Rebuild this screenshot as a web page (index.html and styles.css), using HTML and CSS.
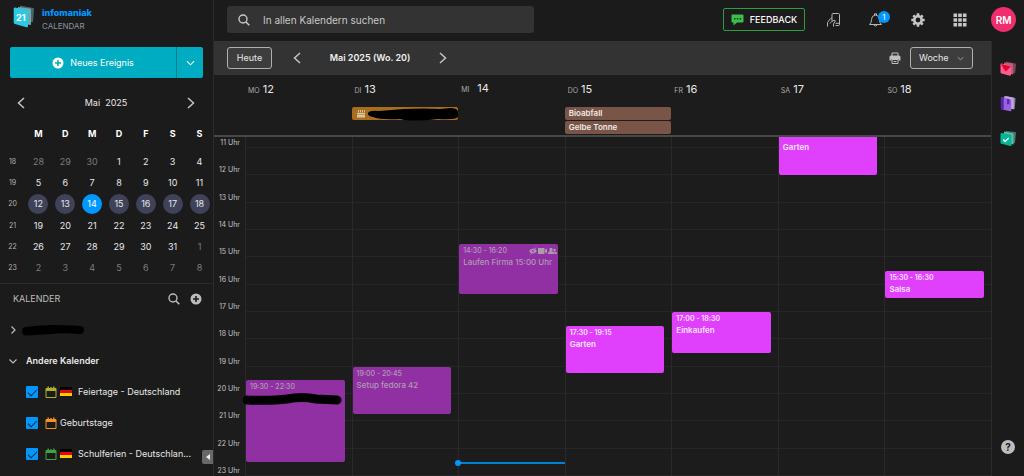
FILE: index.html
```html
<!DOCTYPE html>
<html lang="de">
<head>
<meta charset="utf-8">
<meta name="viewport" content="width=device-width, initial-scale=1">
<title>Infomaniak Calendar</title>
<link rel="stylesheet" href="styles.css">
</head>
<body>
<svg class="defs" aria-hidden="true">
  <symbol id="left" viewBox="0 0 8 12"><path d="M7 1 1.500 6 7 11" fill="none" stroke="currentColor" stroke-width="1.500"/></symbol>
  <symbol id="right" viewBox="0 0 8 12"><path d="M1 1 6.500 6 1 11" fill="none" stroke="currentColor" stroke-width="1.500"/></symbol>
  <symbol id="down" viewBox="0 0 10 6"><path d="M1 1 5 5 9 1" fill="none" stroke="currentColor" stroke-width="1.200"/></symbol>
  <symbol id="search" viewBox="0 0 12 12"><circle cx="5" cy="5" r="4" fill="none" stroke="currentColor" stroke-width="1.400"/><path d="m8 8 3.300 3.300" stroke="currentColor" stroke-width="1.600"/></symbol>
  <symbol id="plus" viewBox="0 0 12 12"><path fill="currentColor" fill-rule="evenodd" d="M6 .5a5.500 5.500 0 1 0 0 11 5.500 5.500 0 0 0 0-11ZM5.200 3h1.600v2.200H9v1.600H6.800V9H5.200V6.800H3V5.200h2.200Z"/></symbol>
  <symbol id="cal" viewBox="0 0 12 12"><path d="M1 2.500h10v9H1zM1 4.500h10" fill="none" stroke="currentColor"/><path d="M1 2.500h10v2H1zM2.500.5h1.400v2H2.500zM8.100.5h1.400v2H8.100zM5.300 1h1.400v1.500H5.300z" fill="currentColor"/></symbol>
  <symbol id="flag" viewBox="0 0 12 9"><path d="M0 0h12v3H0z" fill="#000"/><path d="M0 3h12v3H0z" fill="#e30613"/><path d="M0 6h12v3H0z" fill="#ffce00"/></symbol>
</svg>
<div class="app">
  <aside class="sidebar">
    <a class="brand" href="#">
      <svg class="brand-logo" viewBox="0 0 22 24" aria-hidden="true">
        <path d="M7 .5 20 3q1 .2 1 1l-1 13-12 1z" fill="#44686d"/>
        <path d="m5 2 12 1.500q1 0 1 1V20L5 18z" fill="#75a6aa"/>
        <path d="M2 2.500 14 5q1.500.2 1.500 1.500L15 21q0 1.600-1.500 1.200L2 19q-1.300-.3-1.300-1.500V4Q.7 2.200 2 2.500Z" fill="#2cc9e5"/>
        <text x="3" y="16" class="logo-text">21</text>
      </svg>
      <span class="brand-words"><strong>infomaniak</strong><span>CALENDAR</span></span>
    </a>
    <div class="create">
      <button class="create-main" type="button"><svg class="i12" aria-hidden="true"><use href="#plus"/></svg>Neues Ereignis</button>
      <button class="create-more" type="button" aria-label="Weitere Optionen"><svg class="caret" aria-hidden="true"><use href="#down"/></svg></button>
    </div>
    <div class="month-nav">
      <button type="button" aria-label="Vorheriger Monat"><svg class="chev" aria-hidden="true"><use href="#left"/></svg></button>
      <span>Mai&nbsp; 2025</span>
      <button type="button" aria-label="Nächster Monat"><svg class="chev" aria-hidden="true"><use href="#right"/></svg></button>
    </div>
    <table class="month">
      <thead><tr><td></td><th>M</th><th>D</th><th>M</th><th>D</th><th>F</th><th>S</th><th>S</th></tr></thead>
      <tbody>
        <tr><th>18</th><td class="out">28</td><td class="out">29</td><td class="out">30</td><td>1</td><td>2</td><td>3</td><td>4</td></tr>
        <tr><th>19</th><td>5</td><td>6</td><td>7</td><td>8</td><td>9</td><td>10</td><td>11</td></tr>
        <tr class="week"><th>20</th><td><span>12</span></td><td><span>13</span></td><td><span class="now">14</span></td><td><span>15</span></td><td><span>16</span></td><td><span>17</span></td><td><span>18</span></td></tr>
        <tr><th>21</th><td>19</td><td>20</td><td>21</td><td>22</td><td>23</td><td>24</td><td>25</td></tr>
        <tr><th>22</th><td>26</td><td>27</td><td>28</td><td>29</td><td>30</td><td>31</td><td class="out">1</td></tr>
        <tr><th>23</th><td class="out">2</td><td class="out">3</td><td class="out">4</td><td class="out">5</td><td class="out">6</td><td class="out">7</td><td class="out">8</td></tr>
      </tbody>
    </table>
    <section class="calendars">
      <div class="cal-head">
        <h2>KALENDER</h2>
        <button type="button" aria-label="Kalender suchen"><svg class="i12" aria-hidden="true"><use href="#search"/></svg></button>
        <button type="button" aria-label="Kalender hinzufügen"><svg class="i12" aria-hidden="true"><use href="#plus"/></svg></button>
      </div>
      <button class="group" type="button" aria-label="Meine Kalender">
        <svg class="group-arrow" viewBox="0 0 8 8" aria-hidden="true"><path d="m2.500.5 3.500 3.500-3.500 3.500" fill="none" stroke="#bbb" stroke-width="1.200"/></svg>
        <svg class="redact-name" viewBox="0 0 64 12" aria-hidden="true"><path d="M5 7Q18 5 33 5q14 0 26 1M5 7.500q20-1 30-2" fill="none" stroke="#000" stroke-width="8" stroke-linecap="round"/></svg>
      </button>
      <button class="group" type="button">
        <svg class="group-arrow" viewBox="0 0 8 8" aria-hidden="true"><path d="m.5 2.500 3.500 3.500 3.500-3.500" fill="none" stroke="#bbb" stroke-width="1.200"/></svg>
        Andere Kalender
      </button>
      <label class="cal-item"><input type="checkbox" checked><svg class="i12 lime" aria-hidden="true"><use href="#cal"/></svg><svg class="flag" aria-hidden="true"><use href="#flag"/></svg><span>Feiertage - Deutschland</span></label>
      <label class="cal-item"><input type="checkbox" checked><svg class="i12 orange" aria-hidden="true"><use href="#cal"/></svg><span>Geburtstage</span></label>
      <label class="cal-item"><input type="checkbox" checked><svg class="i12 green" aria-hidden="true"><use href="#cal"/></svg><svg class="flag" aria-hidden="true"><use href="#flag"/></svg><span>Schulferien - Deutschlan...</span></label>
    </section>
    <button class="collapse" type="button" aria-label="Seitenleiste einklappen"><svg viewBox="0 0 4 6" aria-hidden="true"><path d="M4 0v6L0 3z" fill="#eee"/></svg></button>
  </aside>

  <div class="main">
    <header class="topbar">
      <label class="search"><svg class="i12" aria-hidden="true"><use href="#search"/></svg><input type="text" placeholder="In allen Kalendern suchen" aria-label="In allen Kalendern suchen"></label>
      <button class="feedback" type="button"><svg viewBox="0 0 13 12" aria-hidden="true"><path d="M1.500.5h10q1 0 1 1v6q0 1-1 1H6L2.500 11.500v-3h-1q-1 0-1-1v-6q0-1 1-1Z" fill="#3cbc4c"/><path d="M3 4h1.500v1.500H3zM5.800 4h1.500v1.500H5.800zM8.600 4h1.500v1.500H8.600z" fill="#18401d"/></svg>FEEDBACK</button>
      <nav class="actions" aria-label="Konto">
        <button type="button" aria-label="Mobile App"><svg class="i16" viewBox="0 0 16 16" fill="none" stroke="#b5b5b5" aria-hidden="true"><path d="M6 6V2.500q0-1 1-1h5.500q1 0 1 1v10q0 1-1 1H9.500M9.500 11.300h4M1.500 14.500v-4L4.500 6.500 6 6v3.500L8 8.300q1.500-.4 1.200 1L7.500 12v2.500M5.500 9.500 4 11.500"/></svg></button>
        <button class="bell" type="button" aria-label="Benachrichtigungen"><svg class="i16" viewBox="0 0 16 16" fill="none" stroke="#b5b5b5" aria-hidden="true"><path d="M1.500 12.500Q3.500 11 3.500 7.500 3.500 3.500 7.500 3 11.500 3.500 11.500 7.500q0 3.500 2 5ZM6.500 3V1.800h2V3M5.500 12.800q2 2.500 4 0"/></svg><span class="badge">1</span></button>
        <button type="button" aria-label="Einstellungen"><svg class="i16" viewBox="0 0 16 16" aria-hidden="true"><path d="M8 1.300v13.400M1.300 8h13.400M3.300 3.300l9.400 9.400M12.700 3.300l-9.400 9.400" stroke="#c5c5c5" stroke-width="2.600"/><circle cx="8" cy="8" r="3.700" fill="#1b1b1b" stroke="#c5c5c5" stroke-width="2.600"/></svg></button>
        <button type="button" aria-label="Apps"><svg class="i16" viewBox="0 0 16 16" fill="#c5c5c5" aria-hidden="true"><path d="M1.500 1.500h3.600v3.600H1.500zM6.200 1.500h3.600v3.600H6.200zM10.900 1.500h3.600v3.600h-3.600zM1.500 6.200h3.600v3.600H1.500zM6.200 6.200h3.600v3.600H6.200zM10.900 6.200h3.600v3.600h-3.600zM1.500 10.900h3.600v3.600H1.500zM6.200 10.900h3.600v3.600H6.200zM10.900 10.900h3.600v3.600h-3.600z"/></svg></button>
        <button class="avatar" type="button">RM</button>
      </nav>
    </header>

    <div class="workspace">
      <main class="calendar">
        <div class="toolbar">
          <button class="outlined" type="button">Heute</button>
          <div class="period">
            <button type="button" aria-label="Vorherige Woche"><svg class="chev" aria-hidden="true"><use href="#left"/></svg></button>
            <h1>Mai 2025 (Wo. 20)</h1>
            <button type="button" aria-label="Nächste Woche"><svg class="chev" aria-hidden="true"><use href="#right"/></svg></button>
          </div>
          <button class="print" type="button" aria-label="Drucken"><svg viewBox="0 0 12 12" aria-hidden="true"><path d="M3 4V1h6v3" fill="none" stroke="#c0c0c0"/><path d="M2 3.500h8q1.500 0 1.500 1.500v3.500h-2V7h-7v1.500h-2V5q0-1.500 1.500-1.500Z" fill="#c0c0c0"/><path d="M3 7.500h6v4H3zM4.500 9.500h3" fill="none" stroke="#c0c0c0"/></svg></button>
          <div class="view"><select class="outlined" aria-label="Ansicht"><option>Woche</option></select><svg aria-hidden="true"><use href="#down"/></svg></div>
        </div>
        <div class="days">
          <div class="day"><p class="date"><small>MO</small>12</p></div>
          <div class="day"><p class="date"><small>DI</small>13</p>
            <div class="allday birthday"><svg class="cake" viewBox="0 0 8 9" aria-hidden="true"><path d="M0 4h8v1.500H0zM0 6h8v2.500H0zM1 1h1v2.500H1zM3 1h1v2.500H3zM5 1h1v2.500H5zM7 1h.8v2.500H7z" fill="#d8c5a8"/></svg><svg class="redact-day" viewBox="0 0 92 14" aria-hidden="true"><path d="M1 6Q3 3 12 4l25-2q20-1 36 0l10-1q8 0 8 4v5q-2 3-20 2-27 3-38 0-20 1-27-2Q0 9 1 6Z"/></svg></div>
          </div>
          <div class="day today"><p class="date"><small>MI</small>14</p></div>
          <div class="day"><p class="date"><small>DO</small>15</p><div class="allday">Bioabfall</div><div class="allday">Gelbe Tonne</div></div>
          <div class="day"><p class="date"><small>FR</small>16</p></div>
          <div class="day"><p class="date"><small>SA</small>17</p></div>
          <div class="day"><p class="date"><small>SO</small>18</p></div>
        </div>
        <div class="week-grid">
          <time class="hour" style="grid-row:1/2">11 Uhr</time><i class="line" style="grid-row:1/2"></i>
          <time class="hour" style="grid-row:2/14">12 Uhr</time><i class="line" style="grid-row:2/14"></i>
          <time class="hour" style="grid-row:14/26">13 Uhr</time><i class="line" style="grid-row:14/26"></i>
          <time class="hour" style="grid-row:26/38">14 Uhr</time><i class="line" style="grid-row:26/38"></i>
          <time class="hour" style="grid-row:38/50">15 Uhr</time><i class="line" style="grid-row:38/50"></i>
          <time class="hour" style="grid-row:50/62">16 Uhr</time><i class="line" style="grid-row:50/62"></i>
          <time class="hour" style="grid-row:62/74">17 Uhr</time><i class="line" style="grid-row:62/74"></i>
          <time class="hour" style="grid-row:74/86">18 Uhr</time><i class="line" style="grid-row:74/86"></i>
          <time class="hour" style="grid-row:86/98">19 Uhr</time><i class="line" style="grid-row:86/98"></i>
          <time class="hour" style="grid-row:98/110">20 Uhr</time><i class="line" style="grid-row:98/110"></i>
          <time class="hour" style="grid-row:110/122">21 Uhr</time><i class="line" style="grid-row:110/122"></i>
          <time class="hour" style="grid-row:122/134">22 Uhr</time><i class="line" style="grid-row:122/134"></i>
          <time class="hour" style="grid-row:134/146">23 Uhr</time><i class="line" style="grid-row:134/146"></i>
          <i class="col mo"></i><i class="col di"></i><i class="col mi"></i><i class="col do"></i><i class="col fr"></i><i class="col sa"></i><i class="col so"></i>
          <article class="event past mo" style="grid-row:104/140"><time>19:30 - 22:30</time><svg class="redact-event" viewBox="0 0 100 14" aria-hidden="true"><path d="M5 8q25 1 40-1 15-3 29 0l21 1" fill="none" stroke="#000" stroke-width="9" stroke-linecap="round"/></svg></article>
          <article class="event past di" style="grid-row:98/119"><time>19:00 - 20:45</time><p>Setup fedora 42</p></article>
          <article class="event past mi" style="grid-row:44/66"><time>14:30 - 16:20</time><p>Laufen Firma 15:00 Uhr</p>
            <svg class="marks" viewBox="0 0 28 8" fill="#ab9bad" aria-hidden="true"><path d="M0 4q4-5 8 0-4 5-8 0Z"/><circle cx="4" cy="4" r="1.300" fill="#8f2ea2"/><path d="M1.500 7.500 7 .5" stroke="#ab9bad"/><path d="M9 1h6.500v6H9zM16 3l2-1.500v5L16 5z"/><circle cx="22" cy="2.500" r="1.700"/><path d="M19 7q0-3 3-3t3 3Z"/><circle cx="25.500" cy="3" r="1.200"/><path d="M25.500 7q0-1.500-.8-2.500 3.300-.5 3.300 2.500Z"/></svg></article>
          <article class="event do" style="grid-row:80/101"><time>17:30 - 19:15</time><p>Garten</p></article>
          <article class="event fr" style="grid-row:74/92"><time>17:00 - 18:30</time><p>Einkaufen</p></article>
          <article class="event cut sa" style="grid-row:1/14"><p>Garten</p></article>
          <article class="event so" style="grid-row:56/68"><time>15:30 - 16:30</time><p>Salsa</p></article>
          <i class="current mi" style="grid-row:140/141"></i>
        </div>
      </main>
      <nav class="rail" aria-label="Anwendungen">
        <a href="#" aria-label="Mail"><svg viewBox="0 0 16 16" aria-hidden="true"><path d="m6 1 9 2q1 0 1 1l-1 9-9-1z" fill="#80445b"/><path d="m4 2 9 1v11l-9-2z" fill="#b75e7b"/><path d="m1.500 3 8.500 2q1 .2 1 1v8q0 1.500-1 1.200L1.500 13Q.5 12.700.5 12V4q0-1.200 1-1Z" fill="#ff5b91"/><path d="m1 3.500 10 2.500-5.500 5z" fill="#e4002b"/></svg></a>
        <a href="#" aria-label="Kontakte"><svg viewBox="0 0 16 18" aria-hidden="true"><path d="m6 1 9 2q1 0 1 1l-1 11-9-1z" fill="#8a7a9e"/><path d="m4 1 10 2v12l-10-1z" fill="#c6a9e0"/><path d="m1.500 2.500 9 2q1 .2 1 1v11q0 1-1 .8l-9-2q-1-.3-1-1v-11q0-1 1-.8Z" fill="#9a61dc"/><path d="m.5 2.500 3 .6v12.800L.5 15z" fill="#5825b0"/><path d="m7 4 2.500.5v6l-1.200-1.200L7 10z" fill="#5a25c4"/></svg></a>
        <a href="#" aria-label="Aufgaben"><svg viewBox="0 0 16 16" aria-hidden="true"><path d="m6 .5 9 1q1 0 1 1l-1 10-9 1z" fill="#3d786d"/><path d="m4 1 9.500 2v11L4 12z" fill="#70b5a7"/><path d="m1.500 2.500 9 1.500q1 .2 1 1v9.500q0 1.200-1 1l-9-2.300q-1-.3-1-1V3.500q0-1 1-1Z" fill="#00b894"/><path d="m3.200 9 2 2L8.700 7.500" fill="none" stroke="#fff" stroke-width="1.300"/></svg></a>
        <button class="help" type="button" aria-label="Hilfe">?</button>
      </nav>
    </div>
  </div>
</div>
</body>
</html>
```
FILE: styles.css
```css
* { box-sizing: border-box; }

body {
  margin: 0;
  background: #1c1c1d;
  color: #e8e8e8;
  font: 9px/14px Inter, "Liberation Sans", Arial, sans-serif;
}

button, input, select { font: inherit; color: inherit; }
button { display: flex; align-items: center; justify-content: center; margin: 0; padding: 0; border: 0; background: none; }
h1, h2, p { margin: 0; }
svg { display: block; flex: none; }
a { color: inherit; text-decoration: none; }

.defs { position: absolute; width: 0; height: 0; }
.i12 { width: 12px; height: 12px; }
.i16 { width: 16px; height: 16px; }
.chev { width: 8px; height: 12px; color: #c4c4c4; }
.caret { width: 9px; height: 6px; }

.app { display: grid; grid-template-columns: 214px minmax(0, 1fr); min-height: 100vh; }

/* Sidebar */
.sidebar { position: relative; background: #1b1b1b; border-right: 1px solid #2b2b2b; }
.brand { display: flex; gap: 7px; height: 47px; padding: 5px 13px 0; }
.brand-logo { width: 22px; height: 24px; }
.logo-text { fill: #fff; font-size: 9px; font-weight: 700; }
.brand-words { display: flex; flex-direction: column; padding-top: 1px; font-size: 8px; line-height: 13px; color: #8795a1; }
.brand-words strong { font-size: 9px; font-weight: 800; line-height: 14px; color: #0098ff; }

.create { display: flex; height: 31px; margin: 0 10px; color: #fff; }
.create-main { flex: 1; gap: 6px; background: #00acc1; border-radius: 2px 0 0 2px; }
.create-more { width: 27px; background: #00acc1; border-left: 1px solid #087d8c; border-radius: 0 2px 2px 0; }

.month-nav { display: flex; align-items: center; justify-content: space-between; height: 43px; padding: 6px 18px 0 17px; }

.month { width: 100%; height: 158px; border-collapse: collapse; table-layout: fixed; text-align: center; line-height: 20px; }
.month td, .month th { padding: 0; }
.month thead td { width: 25px; }
.month thead th { height: 30px; padding-bottom: 4px; color: #fff; }
.month tbody th { font-size: 7px; font-weight: 400; color: #b4b4b4; }
.month .out { color: #7b7b7b; }
.week span { display: block; width: 20px; margin: 0 auto; border-radius: 50%; background: #40425a; }
.week .now { background: #0098ff; color: #fff; }

.calendars { margin-top: 4px; border-top: 1px solid #2b2b2b; }
.cal-head { display: flex; align-items: center; gap: 10px; height: 30px; padding: 0 11px 0 13px; color: #bcbcbc; }
.cal-head h2 { flex: 1; font-size: 9px; font-weight: 400; }
.group { justify-content: flex-start; gap: 9px; width: 100%; height: 31px; padding-left: 9px; font-weight: 600; }
.group-arrow { width: 8px; height: 8px; }
.redact-name { width: 64px; height: 12px; margin-left: -5px; }
.cal-item { display: flex; align-items: center; gap: 3px; height: 31px; padding-left: 26px; }
.cal-item input { position: relative; appearance: none; width: 12px; height: 12px; margin: 0 4px 0 0; border-radius: 1px; background: #0098ff; }
.cal-item input:checked::after { content: ""; position: absolute; left: 2px; top: 3px; width: 8px; height: 4px; border: solid #10293b; border-width: 0 0 1px 1px; transform: rotate(-45deg); }
.cal-item span { white-space: nowrap; }
.flag { width: 12px; height: 9px; }
.flag + span { margin-left: 3px; }
.lime { color: #afb42b; }
.orange { color: #f59320; }
.green { color: #43a047; }
.collapse { position: absolute; right: 0; bottom: 12px; width: 11px; height: 14px; border-radius: 2px 0 0 2px; background: #686868; }
.collapse svg { width: 4px; height: 6px; }

/* Top bar */
.main { display: flex; flex-direction: column; min-width: 0; }
.topbar { display: flex; align-items: center; height: 41px; padding: 0 8px 2px 13px; background: #1b1b1b; }
.search { display: flex; align-items: center; gap: 13px; flex: 0 1 307px; height: 27px; padding: 0 11px; border-radius: 3px; background: #333; color: #c8c8c8; }
.search input { flex: 1; min-width: 0; padding: 0; border: 0; outline: 0; background: none; font-size: 10px; }
.search input::placeholder { color: #c8c8c8; opacity: 1; }
.feedback { gap: 6px; width: 82px; height: 23px; margin-left: auto; margin-right: 18px; border: 1px solid #2e9e3c; border-radius: 2px; color: #fff; font-weight: 500; }
.feedback svg { width: 13px; height: 12px; }
.actions { display: flex; align-items: center; gap: 20px; }
.actions button { width: 22px; height: 24px; }
.bell { position: relative; }
.badge { position: absolute; right: -3px; top: 3px; width: 12px; height: 12px; border-radius: 50%; background: #0098ff; color: #fff; font-size: 8px; line-height: 12px; text-align: center; }
.actions .avatar { width: 25px; height: 25px; border-radius: 50%; background: #f02d6d; color: #fff; font-size: 10px; font-weight: 600; }

.workspace { display: flex; flex: 1; }
.calendar { display: flex; flex: 1; flex-direction: column; min-width: 0; }

/* Calendar toolbar */
.toolbar { display: flex; align-items: center; height: 34px; padding: 0 18px 0 13px; background: #333; }
.outlined { height: 22px; border: 1px solid #b0b0b0; border-radius: 3px; background: #3d3d3d; }
button.outlined { width: 45px; }
.period { display: flex; align-items: center; justify-content: space-between; width: 154px; margin-left: 21px; }
.period h1 { font-size: 9px; font-weight: 600; color: #f0f0f0; }
.print { margin-left: auto; margin-right: 9px; }
.print svg { width: 12px; height: 12px; }
.view { position: relative; }
.view select { display: block; appearance: none; width: 63px; padding: 0 8px; }
.view svg { position: absolute; right: 9px; top: 9px; width: 7px; height: 5px; color: #b0b0b0; pointer-events: none; }

/* Day headings */
.days, .week-grid { display: grid; grid-template-columns: 31px repeat(7, minmax(0, 1fr)); }
.days { min-height: 62px; border-bottom: 2px solid #484848; }
.day { display: flex; flex-direction: column; gap: 1px; }
.day:first-child { grid-column: 2; }
.date { height: 31px; padding: 7px 0 0 3px; font-size: 11px; line-height: 15px; }
.date small { margin-right: 3px; font-size: 7px; color: #aaa; }
.today .date { padding-top: 6px; }
.today small { margin-right: 8px; }
.allday { display: flex; align-items: center; height: 13px; padding: 0 4px; border-radius: 2px; background: #795548; color: #f1e9e6; font-size: 8px; font-weight: 600; line-height: 13px; }
.birthday { padding: 0 0 0 5px; gap: 2px; background: #a86e1e; }
.cake { width: 8px; height: 9px; }
.redact-day { width: 92px; height: 14px; }

/* Time grid: a lead-in row, then twelve five-minute rows per hour */
.week-grid { flex: 1; min-height: 339px; grid-template-rows: 11px repeat(144, minmax(0, 1fr)); }
.hour { grid-column: 1; align-self: end; padding-right: 5px; text-align: right; color: #c4c4c4; font-size: 7px; line-height: 10px; white-space: nowrap; }
.line { grid-column: 2 / -1; border-bottom: 1px solid #262626; }
.col { grid-row: 1 / -1; border-left: 1px solid #292929; }
.mo { grid-column: 2; }
.di { grid-column: 3; }
.mi { grid-column: 4; }
.do { grid-column: 5; }
.fr { grid-column: 6; }
.sa { grid-column: 7; }
.so { grid-column: 8; }
.event { position: relative; margin: 0 7px 0 1px; padding: 1px 4px; border-radius: 2px; background: #e040fb; color: #fbe4ff; font-size: 8px; font-weight: 600; line-height: 12px; white-space: nowrap; }
.event time { display: block; font-size: 7px; line-height: 11px; }
.past { background: #9030a3; color: #b09ab4; font-weight: 500; }
.cut { padding-top: 4px; border-radius: 0 0 2px 2px; }
.marks { position: absolute; right: 1px; top: 3px; width: 28px; height: 8px; }
.redact-event { width: 100px; height: 14px; margin-left: -8px; }
.current { position: relative; height: 2px; background: #0080d8; }
.current::before { content: ""; position: absolute; left: -3px; top: -2px; width: 6px; height: 6px; border-radius: 50%; background: #0098ff; }

/* App rail */
.rail { display: flex; flex-direction: column; align-items: center; gap: 18px; width: 33px; padding: 19px 0 22px; border-left: 1px solid #2b2b2b; background: #1b1b1b; }
.rail svg { width: 16px; height: 17px; }
.help { width: 14px; height: 14px; margin-top: auto; border-radius: 50%; background: #bdbdbd; color: #1b1b1b; font-size: 10px; font-weight: 700; }
```
